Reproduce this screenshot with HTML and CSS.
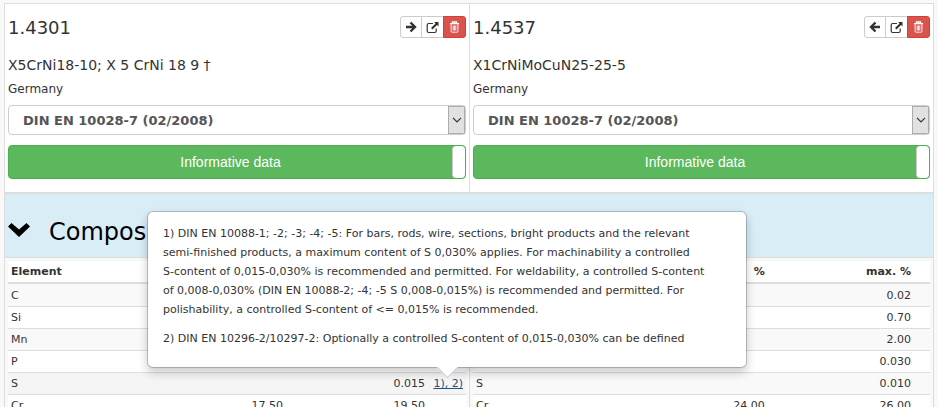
FILE: index.html
```
<!DOCTYPE html>
<html lang="en">
<head>
    <meta charset="utf-8">
    <title>Compare materials</title>
    <meta name="viewport" content="width=device-width, initial-scale=1.0">
    <link rel="stylesheet" href="styles.css">
</head>
<body>
    <!-- shared icons -->
    <svg class="icon-defs" aria-hidden="true">
        <symbol id="arrow" viewBox="0 0 12 12">
            <path d="M1 6h9M5.5 1.5L10 6L5.5 10.5" fill="none" stroke="currentColor" stroke-width="2.4"/>
        </symbol>
        <symbol id="external" viewBox="0 0 13 13">
            <path d="M7 2.5H2.7Q1.2 2.5 1.2 4v6q0 1.5 1.5 1.5h6q1.5 0 1.5-1.5V7.5" fill="none" stroke="currentColor" stroke-width="1.2"/>
            <path d="M8 1h4.5v4.5L11 4L6.5 8.5L5 7L9.5 2.5z" fill="currentColor"/>
        </symbol>
        <symbol id="trash" viewBox="0 0 11 12">
            <path d="M3.5 2V1h4v1M1 2.7h9" fill="none" stroke="currentColor" stroke-width="1.3"/>
            <path d="M2.1 3v7.3q0 .9.9.9h5q.9 0 .9-.9V3M4.2 4.5v5M5.5 4.5v5M6.8 4.5v5" fill="none" stroke="currentColor" stroke-width=".9"/>
        </symbol>
        <symbol id="caret" viewBox="0 0 10 6">
            <path d="M1 .8L5 4.8L9 .8" fill="none" stroke="currentColor" stroke-width="1.2"/>
        </symbol>
        <symbol id="chevron" viewBox="0 0 22 16">
            <path d="M3.5 1L11 7.5L18.5 1L22 4.5L11 15L0 4.5z" fill="currentColor"/>
        </symbol>
    </svg>

    <div class="compare">
        <div class="material">
            <div class="material-head">
                <h2>1.4301</h2>
                <div class="btn-group">
                    <button type="button" class="btn" aria-label="Move right"><svg width="12" height="12"><use href="#arrow"/></svg></button>
                    <button type="button" class="btn" aria-label="Open"><svg width="13" height="13"><use href="#external"/></svg></button>
                    <button type="button" class="btn btn-danger" aria-label="Remove"><svg width="11" height="12"><use href="#trash"/></svg></button>
                </div>
            </div>
            <div class="designation">X5CrNi18-10; X 5 CrNi 18 9 †</div>
            <div class="country">Germany</div>
            <div class="select-wrap">
                <select aria-label="Standard">
                    <option>DIN EN 10028-7 (02/2008)</option>
                </select>
                <span class="select-arrow"><svg width="10" height="6"><use href="#caret"/></svg></span>
            </div>
            <label class="toggle">
                <span>Informative data</span>
                <input type="checkbox" checked>
            </label>
        </div>
        <div class="material">
            <div class="material-head">
                <h2>1.4537</h2>
                <div class="btn-group">
                    <button type="button" class="btn" aria-label="Move left"><svg class="flip" width="12" height="12"><use href="#arrow"/></svg></button>
                    <button type="button" class="btn" aria-label="Open"><svg width="13" height="13"><use href="#external"/></svg></button>
                    <button type="button" class="btn btn-danger" aria-label="Remove"><svg width="11" height="12"><use href="#trash"/></svg></button>
                </div>
            </div>
            <div class="designation">X1CrNiMoCuN25-25-5</div>
            <div class="country">Germany</div>
            <div class="select-wrap">
                <select aria-label="Standard">
                    <option>DIN EN 10028-7 (02/2008)</option>
                </select>
                <span class="select-arrow"><svg width="10" height="6"><use href="#caret"/></svg></span>
            </div>
            <label class="toggle">
                <span>Informative data</span>
                <input type="checkbox" checked>
            </label>
        </div>

        <div class="section-title">
            <svg width="22" height="16"><use href="#chevron"/></svg>
            <h3>Composition</h3>
        </div>

        <div class="values">
            <table>
                <colgroup><col><col class="col-max-noted"><col class="col-note"></colgroup>
                <thead>
                    <tr><th><span class="split"><span>Element</span></span></th><th></th><th></th></tr>
                </thead>
                <tbody>
                    <tr><td><span class="split"><span>C</span></span></td><td></td><td></td></tr>
                    <tr><td><span class="split"><span>Si</span></span></td><td></td><td></td></tr>
                    <tr><td><span class="split"><span>Mn</span></span></td><td></td><td></td></tr>
                    <tr><td><span class="split"><span>P</span></span></td><td></td><td></td></tr>
                    <tr class="active">
                        <td><span class="split"><span>S</span></span></td>
                        <td>0.015</td>
                        <td>
                            <div class="note">
                                <a href="#note-s">1), 2)</a>
                                <div class="popover" id="note-s">
                                    <p>1) DIN EN 10088-1; -2; -3; -4; -5: For bars, rods, wire, sections, bright products and the relevant<br>
                                    semi-finished products, a maximum content of S 0,030% applies. For machinability a controlled<br>
                                    S-content of 0,015-0,030% is recommended and permitted. For weldability, a controlled S-content<br>
                                    of 0,008-0,030% (DIN EN 10088-2; -4; -5 S 0,008-0,015%) is recommended and permitted. For<br>
                                    polishability, a controlled S-content of &lt;= 0,015% is recommended.</p>
                                    <p>2) DIN EN 10296-2/10297-2: Optionally a controlled S-content of 0,015-0,030% can be defined</p>
                                </div>
                            </div>
                        </td>
                    </tr>
                    <tr><td><span class="split"><span>Cr</span><span>17.50</span></span></td><td>19.50</td><td></td></tr>
                </tbody>
            </table>
        </div>
        <div class="values">
            <table>
                <colgroup><col><col class="col-max"><col class="col-empty"></colgroup>
                <thead>
                    <tr><th><span class="split"><span></span><span>%</span></span></th><th>max. %</th><th></th></tr>
                </thead>
                <tbody>
                    <tr><td></td><td>0.02</td><td></td></tr>
                    <tr><td></td><td>0.70</td><td></td></tr>
                    <tr><td></td><td>2.00</td><td></td></tr>
                    <tr><td></td><td>0.030</td><td></td></tr>
                    <tr><td><span class="split"><span>S</span></span></td><td>0.010</td><td></td></tr>
                    <tr><td><span class="split"><span>Cr</span><span>24.00</span></span></td><td>26.00</td><td></td></tr>
                </tbody>
            </table>
        </div>
    </div>
</body>
</html>
```
FILE: styles.css
```
* {
    box-sizing: border-box;
}

body {
    margin: 3px 4px 0;
    background: #f9f9f9;
    color: #333;
    font-family: Verdana, "DejaVu Sans", sans-serif;
    font-size: 11px;
    line-height: 15px;
    overflow: hidden;
}

h2, h3, p {
    margin: 0;
    font-weight: normal;
}

.icon-defs {
    display: none;
}

.compare {
    display: grid;
    grid-template-columns: 1fr 1fr;
    border: 1px solid #ddd;
    border-bottom: 0;
}

.material {
    padding: 12px 3px 13px;
    background: #fff;
}

.material + .material,
.values + .values {
    border-left: 1px solid #ddd;
}

.material-head {
    display: flex;
    justify-content: space-between;
    align-items: flex-start;
    height: 24px;
}

.material-head h2 {
    font-size: 18px;
    line-height: 24px;
}

.btn-group {
    display: flex;
}

.btn {
    display: flex;
    align-items: center;
    justify-content: center;
    width: 23px;
    height: 22px;
    padding: 0;
    border: 1px solid #ccc;
    background: #fff;
    color: #333;
    cursor: pointer;
}

.btn + .btn {
    margin-left: -1px;
}

.btn:first-child {
    width: 22px;
    border-radius: 3px 0 0 3px;
}

.btn:last-child {
    border-radius: 0 3px 3px 0;
}

.btn-danger {
    border-color: #d43f3a;
    background: #d9534f;
    color: #fff;
}

.flip {
    transform: rotate(180deg);
}

.designation {
    margin-top: 13px;
    font-size: 14px;
    line-height: 24px;
}

.country {
    font-size: 12px;
    line-height: 24px;
}

.select-wrap {
    position: relative;
    margin-top: 4px;
}

.select-wrap select {
    display: block;
    width: 100%;
    height: 30px;
    padding: 0 24px 0 14px;
    border: 1px solid #ccc;
    border-radius: 4px;
    background: #fff;
    color: #555;
    font: bold 13px Verdana, "DejaVu Sans", sans-serif;
    appearance: none;
}

.select-arrow {
    position: absolute;
    top: 1px;
    right: 1px;
    bottom: 1px;
    width: 17px;
    display: flex;
    align-items: center;
    justify-content: center;
    border: 1px solid #adadad;
    background: #e1e1e1;
    pointer-events: none;
}

.toggle {
    display: flex;
    height: 34px;
    margin-top: 10px;
    border: 1px solid #4cae4c;
    border-radius: 4px;
    background: #5cb85c;
    color: #fff;
    font: 14px/32px Arial, "Liberation Sans", sans-serif;
    text-align: center;
    cursor: pointer;
}

.toggle span {
    flex: 1;
}

.toggle input {
    width: 13px;
    margin: 0;
    border: 1px solid #ccc;
    border-width: 0 0 0 1px;
    border-radius: 4px;
    background: #fff;
    appearance: none;
}

.section-title {
    grid-column: 1 / -1;
    display: flex;
    align-items: center;
    gap: 19px;
    height: 66px;
    padding: 12px 3px 0;
    border-top: 2px solid #ddd;
    border-bottom: 1px solid #ddd;
    background: #d9edf7;
    color: #000;
}

.section-title h3 {
    font-size: 24px;
    line-height: 30px;
}

.section-title svg {
    margin-bottom: 4px;
}

.values {
    padding: 3px 3px 0;
}

table {
    width: 100%;
    table-layout: fixed;
    border-spacing: 0;
    background: #fff;
}

.col-max {
    width: 32%;
}

.col-max-noted {
    width: 31%;
}

.col-note {
    width: 38px;
}

.col-empty {
    width: 16px;
}

th, td {
    height: 22px;
    padding: 3px;
    border-top: 1px solid #ddd;
    text-align: right;
    white-space: nowrap;
}

th {
    border-top: 0;
    border-bottom: 2px solid #ddd;
}

tbody tr:first-child td {
    border-top-color: #f9f9f9;
}

tbody tr:nth-child(odd) {
    background: #f9f9f9;
}

tbody tr.active {
    background: #f5f5f5;
}

.split {
    display: flex;
    justify-content: space-between;
}

.note {
    position: relative;
}

.note a {
    color: #23527c;
    text-decoration: underline;
}

.popover {
    position: absolute;
    bottom: calc(100% + 8px);
    left: 50%;
    width: 600px;
    margin-left: -300px;
    padding: 12px 15px 9px;
    border: 1px solid #ccc;
    border-color: rgba(0, 0, 0, 0.2);
    border-radius: 6px;
    background: #fff;
    background-clip: padding-box;
    box-shadow: 0 5px 10px rgba(0, 0, 0, 0.2);
    line-height: 19px;
    text-align: left;
    white-space: normal;
}

.popover p {
    margin-bottom: 10px;
}

/* arrow pointing at the note link */
.popover::after {
    content: "";
    position: absolute;
    left: 50%;
    bottom: -8px;
    width: 14px;
    height: 14px;
    margin-left: -7px;
    border: 1px solid #ccc;
    border-width: 0 1px 1px 0;
    background: #fff;
    transform: rotate(45deg);
}
```
